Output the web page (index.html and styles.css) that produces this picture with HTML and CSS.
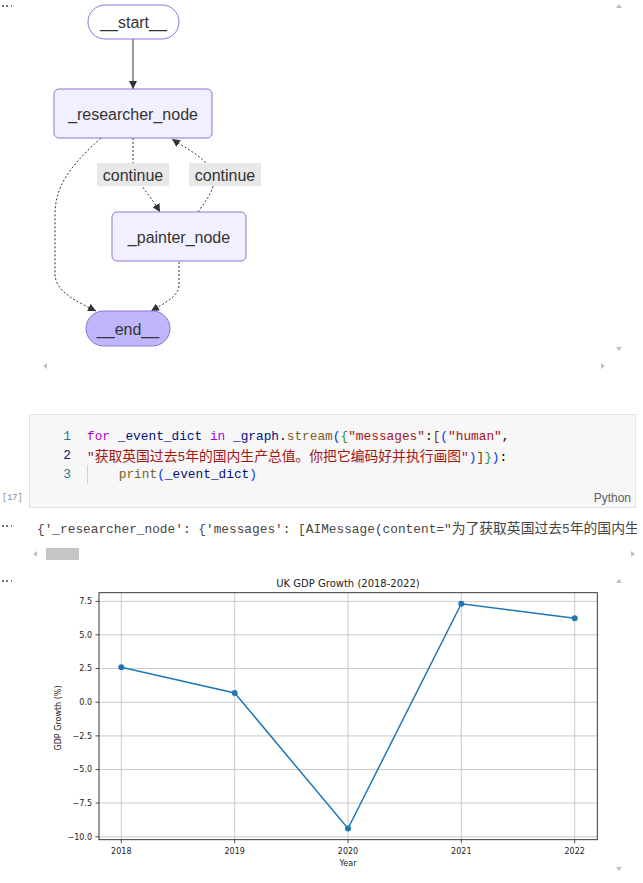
FILE: index.html
```html
<!DOCTYPE html>
<html lang="zh">
<head>
<meta charset="utf-8">
<title>Notebook</title>
<link rel="stylesheet" href="styles.css">
</head>
<body>
<section class="cell out-cell graph-cell">
  <div class="gutter"><span class="dots"></span></div>
  <div class="out-main">
    <svg class="graph" width="576" height="359" viewBox="36 0 576 359" xmlns="http://www.w3.org/2000/svg">
      <defs>
        <marker id="ah" viewBox="0 0 10 10" refX="10" refY="5" markerWidth="8" markerHeight="8" markerUnits="userSpaceOnUse" orient="auto">
          <path d="M0,0 L10,5 L0,10 z" fill="#333"/>
        </marker>
      </defs>
      <g fill="none" stroke="#333" stroke-width="1">
        <path d="M133,39 L133,89" marker-end="url(#ah)"/>
        <g stroke-dasharray="2,2">
          <path d="M133,138 L133,166 C134,180 149,193 160,212" marker-end="url(#ah)"/>
          <path d="M198,212 C207,199 214,190 214,180 C212,160 188,150 172,139" marker-end="url(#ah)"/>
          <path d="M101,138 C70,166 55,186 55,215 L55,274 C55,292 78,302 96,311" marker-end="url(#ah)"/>
          <path d="M179,262 L179,285 C179,296 165,303 151,311" marker-end="url(#ah)"/>
        </g>
      </g>
      <g class="edge-labels">
        <rect x="97" y="163" width="72" height="23" fill="#e8e8e8"/>
        <text x="133" y="175" class="gtext">continue</text>
        <rect x="189" y="163" width="72" height="23" fill="#e8e8e8"/>
        <text x="225" y="175" class="gtext">continue</text>
      </g>
      <g class="nodes" stroke="#9370db" stroke-width="1">
        <rect x="88" y="5" width="91" height="34" rx="17" ry="17" fill="#ffffff" fill-opacity="0"/>
        <rect x="54" y="89" width="158" height="49" rx="5" ry="5" fill="#f2f0ff"/>
        <rect x="112" y="212" width="134" height="49" rx="5" ry="5" fill="#f2f0ff"/>
        <rect x="86" y="311" width="84" height="35" rx="17.5" ry="17.5" fill="#bfb6fc"/>
      </g>
      <text x="133.5" y="22.5" class="gtext">__start__</text>
      <text x="133" y="114" class="gtext">_researcher_node</text>
      <text x="179" y="237" class="gtext">_painter_node</text>
      <text x="128" y="329" class="gtext">__end__</text>
    </svg>
    <div class="hbar"><span class="arr arr-left"></span><span class="arr arr-right"></span></div>
  </div>
  <div class="vbar"><span class="arr arr-up"></span><span class="arr arr-down"></span></div>
</section>

<section class="cell code-cell">
  <div class="exec">[17]</div>
  <div class="code-box">
    <div class="lines">
      <div class="row"><span class="ln">1</span><span class="code"><span class="kw">for</span> <span class="var">_event_dict</span> <span class="kw">in</span> <span class="var">_graph</span>.<span class="fn">stream</span><span class="b1">(</span><span class="b2">{</span><span class="str">"messages"</span>:<span class="b3">[</span><span class="b1">(</span><span class="str">"human"</span>,</span></div>
      <div class="row"><span class="ln ln-active">2</span><span class="code"><span class="str">"<span class="cjk">获取英国过去</span>5<span class="cjk">年的国内生产总值。你把它编码好并执行画图</span>"</span><span class="b1">)</span><span class="b3">]</span><span class="b2">}</span><span class="b1">)</span>:</span></div>
      <div class="row"><span class="ln">3</span><span class="code"><span class="indent">    </span><span class="fn">print</span><span class="b1">(</span><span class="var">_event_dict</span><span class="b1">)</span></span></div>
    </div>
    <div class="lang">Python</div>
  </div>
</section>

<section class="cell text-cell">
  <div class="gutter"><span class="dots"></span></div>
  <div class="text-out">{'_researcher_node': {'messages': [AIMessage(content="<span class="cjk">为了获取英国过去</span>5<span class="cjk">年的国内生产总值</span></div>
</section>
<div class="hscroll">
  <span class="arr arr-left"></span>
  <span class="thumb"></span>
  <span class="spacer"></span>
  <span class="arr arr-right"></span>
</div>

<section class="cell out-cell chart-cell">
  <div class="gutter"><span class="dots"></span></div>
  <div class="out-main">
    <svg class="chart" width="576" height="311" viewBox="36 572 576 311" xmlns="http://www.w3.org/2000/svg">
      <g stroke="#c4c4c4" stroke-width="0.9">
        <line x1="121.3" y1="592.7" x2="121.3" y2="839.7"/>
        <line x1="234.7" y1="592.7" x2="234.7" y2="839.7"/>
        <line x1="348" y1="592.7" x2="348" y2="839.7"/>
        <line x1="461.3" y1="592.7" x2="461.3" y2="839.7"/>
        <line x1="574.7" y1="592.7" x2="574.7" y2="839.7"/>
        <line x1="99" y1="601.4" x2="597.3" y2="601.4"/>
        <line x1="99" y1="634.8" x2="597.3" y2="634.8"/>
        <line x1="99" y1="668.5" x2="597.3" y2="668.5"/>
        <line x1="99" y1="702.3" x2="597.3" y2="702.3"/>
        <line x1="99" y1="735.9" x2="597.3" y2="735.9"/>
        <line x1="99" y1="769.5" x2="597.3" y2="769.5"/>
        <line x1="99" y1="803" x2="597.3" y2="803"/>
        <line x1="99" y1="836.8" x2="597.3" y2="836.8"/>
      </g>
      <polyline points="121.3,667.3 234.7,692.9 348,828.5 461.3,603.7 574.7,618.2" fill="none" stroke="#1f77b4" stroke-width="1.5"/>
      <g fill="#1f77b4">
        <circle cx="121.3" cy="667.3" r="3"/>
        <circle cx="234.7" cy="692.9" r="3"/>
        <circle cx="348" cy="828.5" r="3"/>
        <circle cx="461.3" cy="603.7" r="3"/>
        <circle cx="574.7" cy="618.2" r="3"/>
      </g>
      <rect x="99" y="592.7" width="498.3" height="247" fill="none" stroke="#222" stroke-width="0.9"/>
      <g stroke="#222" stroke-width="0.8">
        <line x1="95.5" y1="601.4" x2="99" y2="601.4"/>
        <line x1="95.5" y1="634.8" x2="99" y2="634.8"/>
        <line x1="95.5" y1="668.5" x2="99" y2="668.5"/>
        <line x1="95.5" y1="702.3" x2="99" y2="702.3"/>
        <line x1="95.5" y1="735.9" x2="99" y2="735.9"/>
        <line x1="95.5" y1="769.5" x2="99" y2="769.5"/>
        <line x1="95.5" y1="803" x2="99" y2="803"/>
        <line x1="95.5" y1="836.8" x2="99" y2="836.8"/>
        <line x1="121.3" y1="839.7" x2="121.3" y2="843.2"/>
        <line x1="234.7" y1="839.7" x2="234.7" y2="843.2"/>
        <line x1="348" y1="839.7" x2="348" y2="843.2"/>
        <line x1="461.3" y1="839.7" x2="461.3" y2="843.2"/>
        <line x1="574.7" y1="839.7" x2="574.7" y2="843.2"/>
      </g>
      <g class="ctext ytick">
        <text x="92" y="604.3">7.5</text>
        <text x="92" y="637.7">5.0</text>
        <text x="92" y="671.4">2.5</text>
        <text x="92" y="705.2">0.0</text>
        <text x="92" y="738.8">−2.5</text>
        <text x="92" y="772.4">−5.0</text>
        <text x="92" y="805.9">−7.5</text>
        <text x="92" y="839.7">−10.0</text>
      </g>
      <g class="ctext xtick">
        <text x="121.3" y="853.5">2018</text>
        <text x="234.7" y="853.5">2019</text>
        <text x="348" y="853.5">2020</text>
        <text x="461.3" y="853.5">2021</text>
        <text x="574.7" y="853.5">2022</text>
        <text x="348" y="866">Year</text>
      </g>
      <text class="ctext ctitle" x="348" y="587">UK GDP Growth (2018-2022)</text>
      <text class="ctext ylabel" x="0" y="0" transform="translate(58 718) rotate(-90)">GDP Growth (%)</text>
    </svg>
  </div>
  <div class="vbar"><span class="arr arr-up"></span><span class="arr arr-down"></span></div>
</section>
</body>
</html>
```

FILE: styles.css
```css
* { box-sizing: border-box; }

html, body {
  margin: 0;
  padding: 0;
  background: #ffffff;
}

body {
  width: 643px;
  height: 883px;
  overflow: hidden;
  font-family: "Liberation Sans", "Noto Sans CJK SC", sans-serif;
  color: #333333;
}

.cell {
  display: flex;
}

.gutter {
  width: 36px;
  flex: none;
}

.dots {
  display: block;
  width: 12px;
  height: 2px;
  margin-left: 2px;
  background: repeating-linear-gradient(to right, #7a7a7a 0 1.6px, transparent 1.6px 4.3px);
}

.out-main {
  width: 576px;
  flex: none;
}

.out-main svg {
  display: block;
}

.vbar {
  width: 14px;
  flex: none;
  display: flex;
  flex-direction: column;
  justify-content: space-between;
  align-items: center;
}

/* scroll arrows */
.arr {
  display: block;
  width: 0;
  height: 0;
  flex: none;
}
.arr-up {
  border-left: 3.5px solid transparent;
  border-right: 3.5px solid transparent;
  border-bottom: 4px solid #c0c0c0;
}
.arr-down {
  border-left: 3.5px solid transparent;
  border-right: 3.5px solid transparent;
  border-top: 4px solid #c0c0c0;
}
.arr-left {
  border-top: 3.5px solid transparent;
  border-bottom: 3.5px solid transparent;
  border-right: 4px solid #c0c0c0;
}
.arr-right {
  border-top: 3.5px solid transparent;
  border-bottom: 3.5px solid transparent;
  border-left: 4px solid #c0c0c0;
}

/* graph output */
.graph-cell {
  height: 373px;
}
.graph-cell .gutter {
  padding-top: 5px;
}
.graph-cell .vbar {
  padding: 4px 0 22px;
}
.hbar {
  height: 14px;
  display: flex;
  align-items: center;
  justify-content: space-between;
  padding: 0 7px;
}

.gtext {
  font-family: "Liberation Sans", sans-serif;
  font-size: 16px;
  fill: #333333;
  text-anchor: middle;
  dominant-baseline: central;
}

/* code cell */
.code-cell {
  margin-top: 41px;
  align-items: flex-end;
}
.exec {
  width: 29px;
  flex: none;
  padding: 0 0 5px 2px;
  font-family: "Liberation Mono", monospace;
  font-size: 8.6px;
  line-height: 10px;
  color: #8a8a8a;
}
.code-box {
  width: 607px;
  flex: none;
  background: #f7f7f7;
  border: 1px solid #e3e3e3;
  padding: 12px 4px 2px 0;
}
.lines {
  font-family: "Liberation Mono", "Noto Sans CJK SC", monospace;
  font-size: 12.8px;
  line-height: 19px;
  color: #000000;
}
.row {
  display: flex;
  height: 19px;
  white-space: pre;
}
.ln {
  width: 41px;
  flex: none;
  text-align: right;
  color: #237893;
}
.ln-active {
  color: #0b216f;
}
.code {
  margin-left: 16px;
  white-space: pre;
}
.cjk {
  font-family: "Noto Sans CJK SC", sans-serif;
  font-size: 13.8px;
}
.kw { color: #af00db; }
.var { color: #001080; }
.fn { color: #795e26; }
.str { color: #a31515; }
.b1 { color: #0431fa; }
.b2 { color: #319331; }
.b3 { color: #7b3814; }
.indent {
  display: inline-block;
  height: 19px;
  vertical-align: top;
  border-left: 1px solid #d3d3d3;
}
.lang {
  margin-top: 7px;
  height: 14px;
  line-height: 14px;
  text-align: right;
  font-family: "Liberation Sans", sans-serif;
  font-size: 12px;
  color: #616161;
}

/* text output */
.text-cell {
  margin-top: 9px;
  height: 20px;
}
.text-cell .gutter {
  padding-top: 8px;
}
.text-out {
  width: 601px;
  padding-left: 1px;
  overflow: hidden;
  white-space: pre;
  font-family: "Liberation Mono", "Noto Sans CJK SC", monospace;
  font-size: 12.8px;
  line-height: 20px;
  color: #454545;
}
.hscroll {
  margin-top: 11px;
  height: 12px;
  display: flex;
  align-items: center;
  padding: 0 8px 0 33px;
}
.thumb {
  display: block;
  width: 33px;
  height: 12px;
  margin-left: 9px;
  background: #c6c6c6;
}
.spacer {
  flex: 1;
}

/* chart output */
.chart-cell {
  margin-top: 12px;
  height: 311px;
}
.chart-cell .gutter {
  padding-top: 7.5px;
}
.chart-cell .vbar {
  padding: 7px 0 12px;
}
.ctext {
  font-family: "DejaVu Sans", sans-serif;
  font-size: 8px;
  fill: #222222;
}
.ytick text {
  text-anchor: end;
}
.xtick text {
  text-anchor: middle;
}
.ctitle {
  font-size: 10px;
  text-anchor: middle;
}
.ylabel {
  text-anchor: middle;
  dominant-baseline: central;
}
```
